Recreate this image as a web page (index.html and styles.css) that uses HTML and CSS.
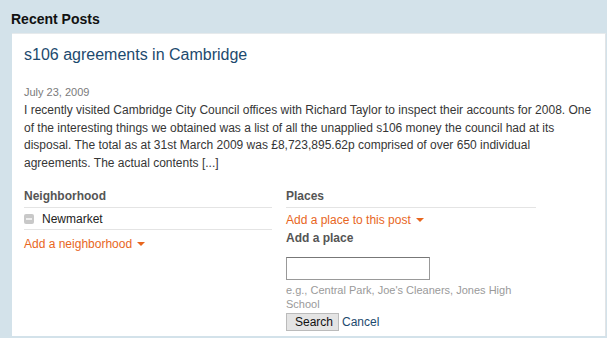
FILE: index.html
```html
<!DOCTYPE html>
<html>
<head>
<meta charset="utf-8">
<link rel="stylesheet" href="styles.css">
</head>
<body>
<div class="widget">
  <h2 class="widget-title">Recent Posts</h2>
  <div class="panel">
    <h3 class="post-title">s106 agreements in Cambridge</h3>
    <div class="date">July 23, 2009</div>
    <p class="excerpt">I recently visited Cambridge City Council offices with Richard Taylor to inspect their accounts for 2008. One of the interesting things we obtained was a list of all the unapplied s106 money the council had at its disposal. The total as at 31st March 2009 was £8,723,895.62p comprised of over 650 individual agreements. The actual contents [...]</p>
    <div class="meta">
      <div class="col col-left">
        <div class="col-head">Neighborhood</div>
        <div class="item"><span class="minus"></span><span>Newmarket</span></div>
        <a class="add-link add-nb">Add a neighborhood <span class="caret"></span></a>
      </div>
      <div class="col col-right">
        <div class="col-head">Places</div>
        <a class="add-link add-place">Add a place to this post <span class="caret"></span></a>
        <div class="form-label">Add a place</div>
        <input class="place-input" type="text">
        <div class="hint">e.g., Central Park, Joe's Cleaners, Jones High School</div>
        <div class="actions"><button class="btn">Search</button><a class="cancel">Cancel</a></div>
      </div>
    </div>
  </div>
</div>
</body>
</html>
```

FILE: styles.css
```css
* { box-sizing: border-box; }
html, body { margin: 0; padding: 0; }
body {
  background: #d3e2ea;
  font-family: "Liberation Sans", Arial, sans-serif;
  width: 607px;
  height: 338px;
  overflow: hidden;
}
.widget { padding: 0 1px 0 12px; }
.widget-title {
  margin: 0;
  margin-left: -1px;
  font-size: 14px;
  font-weight: bold;
  color: #111;
  height: 33px;
  line-height: 39px;
}
.panel {
  background: #fff;
  border-right: 1px solid #e2e4e6;
  border-top: 1px solid #e6eaec;
  padding: 11px 12px 0 12px;
  height: 303px;
}
.post-title {
  margin: 0;
  font-size: 16px;
  font-weight: normal;
  color: #1d4a6e;
  line-height: 20px;
}
.date {
  margin-top: 20px;
  font-size: 11px;
  color: #7a7a7a;
  line-height: 14px;
}
.excerpt {
  margin: 3px 0 0;
  font-size: 12px;
  line-height: 17.5px;
  color: #363636;
}
.meta {
  display: flex;
  gap: 14px;
  margin-top: 16px;
}
.col-left { width: 248px; }
.col-right { width: 250px; }
.col-head {
  font-size: 12px;
  font-weight: bold;
  color: #555;
  line-height: 16px;
  padding-bottom: 3px;
  border-bottom: 1px solid #e4e4e4;
}
.item {
  display: flex;
  align-items: center;
  gap: 8px;
  font-size: 12px;
  color: #222;
  height: 22px;
  border-bottom: 1px solid #e4e4e4;
}
.minus {
  width: 10px;
  height: 10px;
  background: #c8c8c8;
  border-radius: 2px;
  position: relative;
}
.minus::after {
  content: "";
  position: absolute;
  left: 2px;
  right: 2px;
  top: 4px;
  height: 2px;
  background: #eee;
}
.add-link {
  display: block;
  font-size: 12px;
  color: #e8661e;
  line-height: 16px;
}
.add-nb { margin-top: 6px; }
.add-place { margin-top: 4px; }
.caret {
  display: inline-block;
  width: 0;
  height: 0;
  border-left: 4px solid transparent;
  border-right: 4px solid transparent;
  border-top: 4px solid #e8661e;
  vertical-align: middle;
  margin-left: 2px;
  margin-top: -2px;
}
.form-label {
  font-size: 12px;
  font-weight: bold;
  color: #555;
  line-height: 16px;
  margin-top: 2px;
}
.place-input {
  display: block;
  width: 144px;
  height: 23px;
  margin-top: 11px;
  border: 1px solid #999;
  border-top-color: #777;
  background: #fff;
}
.hint {
  font-size: 11px;
  color: #9a9a9a;
  line-height: 14px;
  margin-top: 3px;
  width: 240px;
}
.actions {
  display: flex;
  align-items: center;
  margin-top: 2px;
}
.btn {
  font-family: "Liberation Sans", Arial, sans-serif;
  font-size: 12px;
  height: 18px;
  padding: 0 8px;
  background: #e4e4e4;
  border: 1px solid #bbb;
  border-radius: 0;
  color: #111;
  width: 53px;
}
.cancel {
  margin-left: 3px;
  font-size: 12px;
  color: #1d4a6e;
}
```
